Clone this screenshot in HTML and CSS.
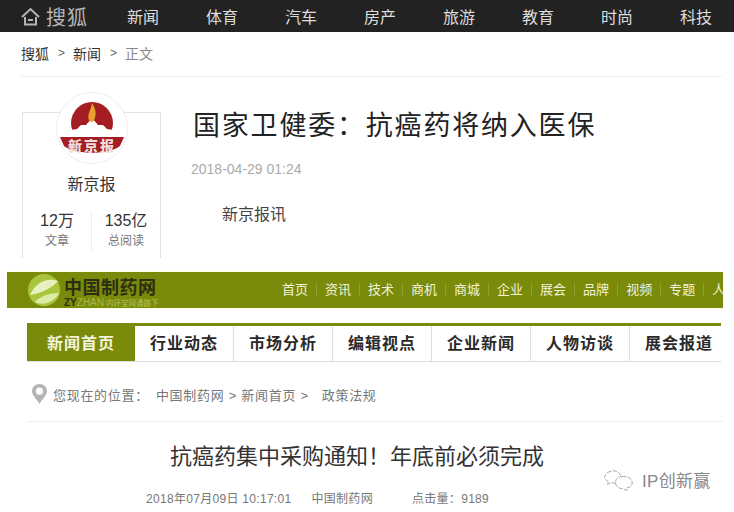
FILE: index.html
```html
<!DOCTYPE html>
<html lang="zh-CN">
<head>
    <meta charset="UTF-8">
    <title>国家卫健委&#xFF1A;抗癌药将纳入医保</title>
    <link rel="stylesheet" href="styles.css">
</head>
<body>
    <!-- Sohu top bar -->
    <header class="topbar">
        <a class="brand">
            <svg class="home-icon" width="19" height="19" viewBox="0 0 19 19" fill="none" stroke="#b5b5b5" stroke-width="2">
                <path d="M1 10 L9.5 2 L18 10"/>
                <path d="M4 10 V17.5 H15 V10"/>
                <path d="M7 13 H12"/>
            </svg>
            <span class="brand-name">搜狐</span>
        </a>
        <span class="brand-sep"></span>
        <nav class="topnav">
            <a>新闻</a><a>体育</a><a>汽车</a><a>房产</a><a>旅游</a><a>教育</a><a>时尚</a><a>科技</a>
        </nav>
    </header>

    <div class="crumbs">
        <a>搜狐</a><span class="gt">&gt;</span><a>新闻</a><span class="gt">&gt;</span><span class="current">正文</span>
    </div>

    <section class="article">
        <aside class="author">
            <div class="avatar">
                <svg width="70" height="70" viewBox="0 0 70 70">
                    <circle cx="35" cy="30" r="21" fill="#a31d22"/>
                    <path d="M10 44 L14 37 L20 36 L24 32 L29 32 L35 25 L41 32 L46 32 L50 36 L56 37 L60 44 Z" fill="#ffffff"/>
                    <path d="M35 10 C38 15 39 18 38.500 22 C38 27 36 29 34.500 29 C32 29 31 26 31.500 22 C32 19 34 16 35 10 Z" fill="#e8a12c"/>
                    <path d="M3 44 H67 L63 53 C52 62 18 62 7 53 Z" fill="#a31d22"/>
                    <text class="avatar-text" x="35" y="58" text-anchor="middle">新京报</text>
                </svg>
            </div>
            <div class="author-name">新京报</div>
            <div class="stats">
                <div class="stat">
                    <b>12万</b>
                    <span>文章</span>
                </div>
                <div class="stat">
                    <b>135亿</b>
                    <span>总阅读</span>
                </div>
            </div>
        </aside>
        <div class="article-main">
            <h1>国家卫健委&#xFF1A;抗癌药将纳入医保</h1>
            <div class="date">2018-04-29 01:24</div>
            <p class="lead">新京报讯</p>
        </div>
    </section>

    <!-- embedded screenshot of the other site -->
    <section class="embed">
        <div class="greenbar">
            <div class="zy-logo">
                <svg width="34" height="34" viewBox="0 0 34 34">
                    <circle cx="17" cy="17" r="16" fill="#a9c53c"/>
                    <path d="M3 22 C8 10 20 4 31 8 C26 14 16 20 3 22 Z" fill="#e9f0c0"/>
                    <path d="M8 29 C14 22 24 20 32 20 C29 27 18 34 8 29 Z" fill="#dfe9a8"/>
                </svg>
                <div class="zy-text">
                    <div class="zy-name">中国制药网</div>
                    <div class="zy-sub"><b>ZY</b><i>ZHAN</i> 内环宝网通路下</div>
                </div>
            </div>
            <nav class="greennav">
                <a>首页</a><a>资讯</a><a>技术</a><a>商机</a><a>商城</a><a>企业</a><a>展会</a><a>品牌</a><a>视频</a><a>专题</a><a class="cut">人</a>
            </nav>
        </div>

        <nav class="tabs">
            <a class="tab active">新闻首页</a>
            <a class="tab">行业动态</a>
            <a class="tab">市场分析</a>
            <a class="tab">编辑视点</a>
            <a class="tab">企业新闻</a>
            <a class="tab">人物访谈</a>
            <a class="tab">展会报道</a>
        </nav>

        <div class="location">
            <svg width="15" height="20" viewBox="0 0 15 20">
                <path d="M7.5 0 C3 0 0 3.2 0 7.2 C0 11.5 5 15 7.5 20 C10 15 15 11.5 15 7.2 C15 3.2 12 0 7.5 0 Z" fill="#b4b4b4"/>
                <circle cx="7.5" cy="7.2" r="3.6" fill="#fff"/>
            </svg>
            <span class="loc-label">您现在的位置&#xFF1A;</span>
            <span>中国制药网 &gt; 新闻首页 &gt;</span>
            <span class="loc-last">政策法规</span>
        </div>

        <h2>抗癌药集中采购通知&#xFF01;年底前必须完成</h2>
        <div class="meta">
            <span>2018年07月09日 10:17:01</span>
            <span>中国制药网</span>
            <span>点击量&#xFF1A;9189</span>
        </div>
    </section>

    <!-- wechat watermark -->
    <div class="watermark">
        <svg width="30" height="24" viewBox="0 0 34 24" fill="none" stroke="#9a9a9a" stroke-width="1" stroke-dasharray="5 1.5">
            <path d="M19 7 C17 2 12 1 8 2 C3 3 0 7 1 10 C2 12 3 13 5 14 L4 17 L8 15 C10 15.500 12 15.500 13 15"/>
            <path d="M22 8 C16 8 13 11 13 15 C13 19 17 22 22 22 L26 24 L26 21 C30 20 32 18 32 15 C32 11 28 8 22 8 Z"/>
        </svg>
        <span>IP创新赢</span>
    </div>
</body>
</html>
```

FILE: styles.css
```css
html, body {
    margin: 0;
    padding: 0;
    height: 512px;
    overflow: hidden;
}

body {
    position: relative;
    background-color: #ffffff;
    font-family: "Liberation Sans", "Noto Sans CJK SC", sans-serif;
    color: #333333;
}

/* top bar */
.topbar {
    display: flex;
    align-items: center;
    height: 32px;
    padding-left: 21px;
    background-color: #222222;
    overflow: hidden;
    white-space: nowrap;
}

.brand {
    display: flex;
    align-items: center;
    gap: 6px;
    color: #b5b5b5;
}

.brand-name {
    font-size: 20px;
    letter-spacing: 1px;
}

.brand-sep {
    width: 1px;
    height: 16px;
    margin-left: 16px;
    background-color: #444444;
}

.topnav {
    display: flex;
    margin-left: 23px;
}

.topnav a {
    width: 79px;
    flex: none;
    font-size: 16px;
    color: #dddddd;
}

/* breadcrumb */
.crumbs {
    display: flex;
    align-items: center;
    height: 42px;
    padding-bottom: 2px;
    margin-left: 21px;
    margin-right: 12px;
    border-bottom: 1px solid #f0f0f0;
    font-size: 14px;
    color: #333333;
}

.crumbs .gt {
    margin: 0 8px 0 9px;
    font-size: 12px;
    color: #666666;
}

.crumbs .current {
    color: #8a8a8a;
}

/* sohu article */
.article {
    display: flex;
    height: 195px;
    padding-left: 22px;
}

.author {
    width: 137px;
    height: 145px;
    margin-top: 35px;
    border: 1px solid #e2e2e2;
    border-bottom: none;
    text-align: center;
}

.avatar {
    display: flex;
    align-items: center;
    justify-content: center;
    width: 70px;
    height: 70px;
    margin: -21px auto 0;
    border: 1px solid #eeeeee;
    border-radius: 50%;
    background-color: #ffffff;
}

.avatar-text {
    font-size: 14px;
    font-weight: 900;
    letter-spacing: 2px;
    fill: #f0dcd8;
    font-family: "Noto Sans CJK SC", sans-serif;
}

.author-name {
    margin-top: 10px;
    font-size: 16px;
    line-height: 22px;
}

.stats {
    display: flex;
    margin-top: 15px;
}

.stat {
    flex: 1;
    display: flex;
    flex-direction: column;
    font-size: 12px;
    color: #777777;
}

.stat + .stat {
    border-left: 1px solid #eeeeee;
}

.stat b {
    font-weight: 400;
    font-size: 16px;
    line-height: 20px;
    color: #333333;
}

.stat span {
    line-height: 20px;
}

.article-main {
    margin-left: 32px;
}

h1 {
    margin: 27px 0 0;
    font-size: 27px;
    font-weight: 400;
    line-height: 40px;
    letter-spacing: 1.8px;
    color: #222222;
    font-family: "Noto Sans CJK SC", sans-serif;
    white-space: nowrap;
}

.date {
    margin: 16px 0 0 -2px;
    font-size: 14px;
    line-height: 18px;
    color: #aaaaaa;
}

.lead {
    margin: 26px 0 0 29px;
    font-size: 16px;
    line-height: 22px;
    color: #444444;
}

/* embedded page */
.embed {
    padding: 0 11px 0 7px;
}

.greenbar {
    display: flex;
    align-items: center;
    height: 36px;
    padding-left: 20px;
    background-color: #7a8b0b;
    box-shadow: 0 0 0 1px #fdfde8;
    overflow: hidden;
    white-space: nowrap;
}

.zy-logo {
    display: flex;
    align-items: center;
    gap: 3px;
    width: 247px;
    flex: none;
}

.zy-text {
    margin-top: 6px;
}

.zy-name {
    font-size: 18px;
    line-height: 19px;
    font-weight: 700;
    color: #2c3010;
    letter-spacing: 0.5px;
}

.zy-sub {
    font-size: 7.5px;
    line-height: 9px;
    color: #b5c25a;
}

.zy-sub b {
    font-size: 10px;
    color: #2c3010;
}

.zy-sub i {
    font-style: normal;
    font-size: 10px;
    color: #a8b94a;
}

.greennav {
    display: flex;
    font-size: 13px;
    color: #f2f2d8;
}

.greennav a {
    flex: none;
    padding: 0 8px;
    line-height: 14px;
    border-right: 1px solid #8f9f2e;
}

.greennav .cut {
    border: none;
}

.tabs {
    display: flex;
    height: 35px;
    margin: 15px 2px 0 20px;
    border-top: 3px solid #7a8b0b;
    border-bottom: 1px solid #dddddd;
}

.tab {
    display: flex;
    align-items: center;
    justify-content: center;
    width: 98px;
    flex: none;
    padding-bottom: 3px;
    font-size: 16px;
    font-weight: 700;
    letter-spacing: 1px;
    color: #2a2a2a;
    border-right: 1px solid #dddddd;
    white-space: nowrap;
}

.tab.active {
    width: 108px;
    background-color: #7a8b0b;
    color: #f4f4dc;
    border-right: none;
}

.tab:last-child {
    border-right: none;
}

.location {
    display: flex;
    align-items: center;
    height: 54px;
    padding: 5px 0 0 5px;
    margin-left: 20px;
    border-bottom: 1px solid #eeeeee;
    font-size: 13px;
    letter-spacing: 0.7px;
    color: #777777;
}

.loc-label {
    margin: 0 7px 0 6px;
}

.loc-last {
    margin-left: 13px;
}

h2 {
    margin: 16px 16px 0 0;
    font-size: 22px;
    font-weight: 400;
    line-height: 32px;
    text-align: center;
    color: #333333;
    font-family: "Noto Sans CJK SC", sans-serif;
    white-space: nowrap;
}

.meta {
    display: flex;
    gap: 20px;
    margin: 21px 0 0 139px;
    font-size: 12px;
    line-height: 16px;
    letter-spacing: 0.3px;
    color: #777777;
    white-space: nowrap;
}

.meta span:last-child {
    margin-left: 19px;
}

/* overlay watermark */
.watermark {
    position: absolute;
    left: 604px;
    top: 467px;
    display: flex;
    align-items: center;
    gap: 8px;
    font-size: 17px;
    letter-spacing: 0.3px;
    color: #888888;
}
```
